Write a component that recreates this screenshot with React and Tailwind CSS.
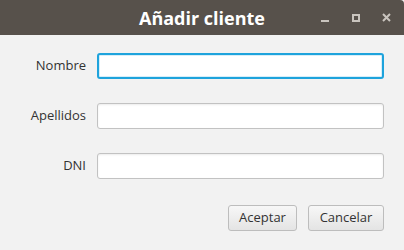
export default function App() {
  const fields = [
    { label: "Nombre", focused: true },
    { label: "Apellidos" },
    { label: "DNI" },
  ]

  return (
    <div className="w-[404px] h-[250px] bg-[#f2f2f2] flex flex-col font-['Open_Sans',sans-serif] overflow-hidden">
      {/* title bar */}
      <div className="h-[35px] bg-[#57514b] rounded-tr-[4px] flex items-center relative">
        <div className="flex-1 text-center text-white font-bold text-[18px] leading-none">
          Añadir cliente
        </div>
        <div className="absolute right-[13px] top-0 h-[35px] flex items-center gap-[22px] text-[#c9c4be]">
          <svg width="9" height="9" viewBox="0 0 9 9"><rect x="0" y="7" width="8" height="2" fill="currentColor" /></svg>
          <svg width="8" height="8" viewBox="0 0 8 8"><rect x="1" y="1" width="6" height="6" fill="none" stroke="currentColor" strokeWidth="2" /></svg>
          <svg width="9" height="9" viewBox="0 0 9 9"><path d="M1 1 L8 8 M8 1 L1 8" stroke="currentColor" strokeWidth="2" /></svg>
        </div>
      </div>

      <div className="flex flex-col pt-[18px] pl-[20px] pr-[20px] gap-[24px]">
        {fields.map((f) => (
          <div key={f.label} className="flex items-center">
            <label className="w-[77px] text-right text-[13px] text-[#333333] pr-[11px] shrink-0">{f.label}</label>
            <div
              className={
                f.focused
                  ? "flex-1 h-[26px] bg-white rounded-[3px] border-2 border-[#1ea3dc] shadow-[inset_0_0_0_1px_#d6eef9]"
                  : "flex-1 h-[26px] bg-white rounded-[3px] border border-[#c2c2c2] shadow-[inset_0_1px_2px_rgba(0,0,0,0.08)]"
              }
            />
          </div>
        ))}
      </div>

      <div className="flex justify-end gap-[11px] pr-[20px] mt-[26px]">
        <button className="h-[26px] w-[69px] rounded-[3px] border border-[#bdbdbd] bg-gradient-to-b from-[#f7f7f7] to-[#e4e4e4] text-[13px] text-[#333333]">
          Aceptar
        </button>
        <button className="h-[26px] w-[76px] rounded-[3px] border border-[#bdbdbd] bg-gradient-to-b from-[#f7f7f7] to-[#e4e4e4] text-[13px] text-[#333333]">
          Cancelar
        </button>
      </div>
    </div>
  )
}
